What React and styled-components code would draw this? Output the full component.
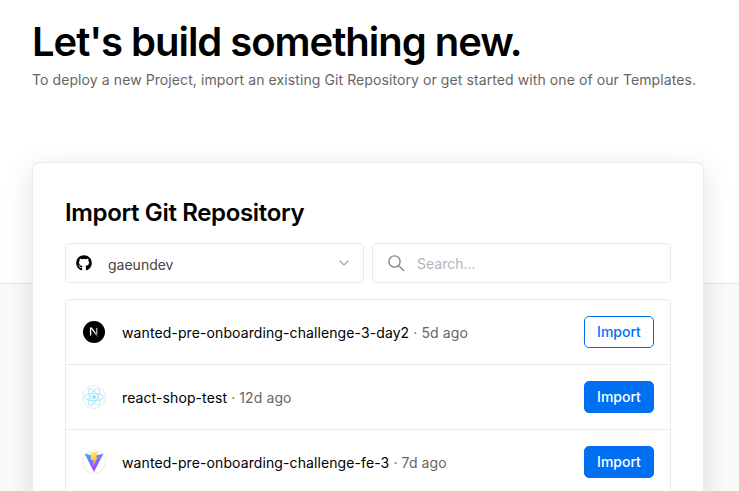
import React from 'react'
import styled, { createGlobalStyle } from 'styled-components'
import { FaGithub } from 'react-icons/fa'
import { FiChevronDown } from 'react-icons/fi'

const GlobalStyle = createGlobalStyle`
    html, body {
        margin: 0;
        height: 100%;
        overflow: hidden;
        background: #fafafa;
    }
    * {
        box-sizing: border-box;
    }
    body {
        font-family: Inter, "Liberation Sans", sans-serif;
    }
`;

const Hero = styled.header`
    height: 284px;
    padding: 16px 32px 0;
    background: #fff;
    border-bottom: 1px solid #eaeaea;
`;

const Title = styled.h1`
    margin: 0;
    font-size: 40px;
    line-height: 52px;
    font-weight: 600;
    letter-spacing: -1.03px;
    color: #000;
`;

const Subtitle = styled.p`
    margin: 0;
    font-size: 14px;
    line-height: 24px;
    letter-spacing: 0.09px;
    color: #666;
`;

const Main = styled.main`
    padding: 0 35px 0 32px;
`;

const Card = styled.section`
    margin-top: -122px;
    padding: 32px;
    height: 500px;
    background: #fff;
    border: 1px solid #eaeaea;
    border-radius: 8px;
    box-shadow: 0 8px 30px rgba(0, 0, 0, 0.12);
`;

const CardTitle = styled.h2`
    margin: 0 0 12px;
    font-size: 24px;
    line-height: 36px;
    font-weight: 600;
    letter-spacing: -0.35px;
    color: #000;
`;

const Controls = styled.div`
    display: grid;
    grid-template-columns: 299px 299px;
    gap: 8px;
    margin-bottom: 16px;
`;

const Field = styled.div`
    height: 40px;
    display: flex;
    align-items: center;
    border: 1px solid #eaeaea;
    border-radius: 5px;
    background: #fff;
    font-size: 14px;
`;

const ScopeField = styled(Field)`
    padding: 0 11px 0 10px;
    color: #444;
`;

const ScopeName = styled.span`
    flex: 1;
    margin-left: 16px;
    padding-top: 2px;
`;

const SearchField = styled(Field)`
    padding: 0 14px;
    color: #888;
`;

const SearchInput = styled.input`
    flex: 1;
    min-width: 0;
    margin-left: 12px;
    padding: 0;
    border: none;
    outline: none;
    background: transparent;
    font: inherit;
    color: #000;

    &::placeholder {
        color: #b3b3b3;
        opacity: 1;
    }
`;

const RepoList = styled.ul`
    margin: 0;
    padding: 0;
    list-style: none;
    border: 1px solid #eaeaea;
    border-radius: 5px;
`;

const RepoRow = styled.li`
    box-sizing: content-box;
    height: 64px;
    display: flex;
    align-items: center;
    padding: 0 16px;
    border-top: ${props => (props.$first ? 'none' : '1px solid #eaeaea')};
`;

const RepoIcon = styled.div`
    width: ${props => (props.$plain ? '22px' : '24px')};
    height: ${props => (props.$plain ? '22px' : '24px')};
    margin: ${props => (props.$plain ? '0 1px' : '0')};
    flex: none;
    display: flex;
    align-items: center;
    justify-content: center;
    border-radius: 50%;
    border: ${props => (props.$plain ? 'none' : '1px solid #eaeaea')};
    background: ${props => (props.$plain ? '#000' : '#fff')};
`;

const RepoText = styled.div`
    flex: 1;
    min-width: 0;
    margin-left: 16px;
    padding-top: 2px;
    font-size: 14px;
    line-height: 20px;
    letter-spacing: 0.1px;
    color: #000;
    white-space: nowrap;
`;

const RepoMeta = styled.span`
    color: #666;
`;

const ImportButton = styled.button`
    width: 70px;
    height: 32px;
    padding: 0 0 2px;
    border-radius: 5px;
    border: 1px solid #0070f3;
    background: ${props => (props.$outline ? '#fff' : '#0070f3')};
    color: ${props => (props.$outline ? '#0070f3' : '#fff')};
    font-family: inherit;
    font-size: 14px;
    font-weight: 500;
`;

const SearchGlyph = () => (
    <svg width="18" height="18" viewBox="0 0 18 18" fill="none" stroke="currentColor" strokeWidth="1.4" strokeLinecap="round">
        <circle cx="7.5" cy="7.5" r="5.6" />
        <path d="M11.8 11.8 L16.6 16.6" />
    </svg>
);

const NextLogo = () => (
    <svg width="14" height="14" viewBox="0 0 14 14" fill="none">
        <defs>
            <linearGradient id="nextFade" x1="0.2" y1="0.2" x2="1" y2="1">
                <stop offset="0.3" stopColor="#fff" />
                <stop offset="1" stopColor="#fff" stopOpacity="0.1" />
            </linearGradient>
        </defs>
        <path d="M3.6 10.6V3.2h.9L11 12" stroke="url(#nextFade)" strokeWidth="1.3" />
        <path d="M9.8 3v6" stroke="#ddd" strokeWidth="1.1" />
    </svg>
);

const ReactLogo = () => (
    <svg width="22" height="22" viewBox="-11 -11 22 22" fill="none" stroke="#61dafb" strokeWidth="0.7" opacity="0.75">
        <circle r="1.9" fill="#61dafb" stroke="none" />
        <ellipse rx="9.5" ry="3.7" />
        <ellipse rx="9.5" ry="3.7" transform="rotate(60)" />
        <ellipse rx="9.5" ry="3.7" transform="rotate(120)" />
    </svg>
);

const ViteLogo = () => (
    <svg width="22" height="22" viewBox="0 0 20 20">
        <defs>
            <linearGradient id="viteBody" x1="0.2" y1="0" x2="0.6" y2="1">
                <stop offset="0" stopColor="#41a5ff" />
                <stop offset="1" stopColor="#bd34fe" />
            </linearGradient>
            <linearGradient id="viteBolt" x1="0.3" y1="0" x2="0.5" y2="1">
                <stop offset="0" stopColor="#ffea83" />
                <stop offset="1" stopColor="#ffa800" />
            </linearGradient>
        </defs>
        <path d="M1.5 2.5 L10 19 L18.5 2.5 L13 3.6 L10 4.4 L6 3.4 Z" fill="url(#viteBody)" />
        <path d="M6.5 1.2 L14 0.6 L11.8 5.5 L13.4 5.2 L9 14 L9.6 8 L7.4 8.5 Z" fill="url(#viteBolt)" />
    </svg>
);

const repos = [
    { name: 'wanted-pre-onboarding-challenge-3-day2', age: '5d ago', logo: <NextLogo />, plain: true, outline: true },
    { name: 'react-shop-test', age: '12d ago', logo: <ReactLogo /> },
    { name: 'wanted-pre-onboarding-challenge-fe-3', age: '7d ago', logo: <ViteLogo /> },
];

const App = () => {
    return <>
        <GlobalStyle />
        <Hero>
            <Title>Let's build something new.</Title>
            <Subtitle>To deploy a new Project, import an existing Git Repository or get started with one of our Templates.</Subtitle>
        </Hero>
        <Main>
            <Card>
                <CardTitle>Import Git Repository</CardTitle>
                <Controls>
                    <ScopeField>
                        <FaGithub size={16} color="#000" />
                        <ScopeName>gaeundev</ScopeName>
                        <FiChevronDown size={16} color="#aaa" />
                    </ScopeField>
                    <SearchField>
                        <SearchGlyph />
                        <SearchInput placeholder="Search..." />
                    </SearchField>
                </Controls>
                <RepoList>
                    {repos.map((repo, i) => (
                        <RepoRow key={repo.name} $first={i === 0}>
                            <RepoIcon $plain={repo.plain}>{repo.logo}</RepoIcon>
                            <RepoText>{repo.name} <RepoMeta>· {repo.age}</RepoMeta></RepoText>
                            <ImportButton $outline={repo.outline}>Import</ImportButton>
                        </RepoRow>
                    ))}
                </RepoList>
            </Card>
        </Main>
    </>
}

export default App
